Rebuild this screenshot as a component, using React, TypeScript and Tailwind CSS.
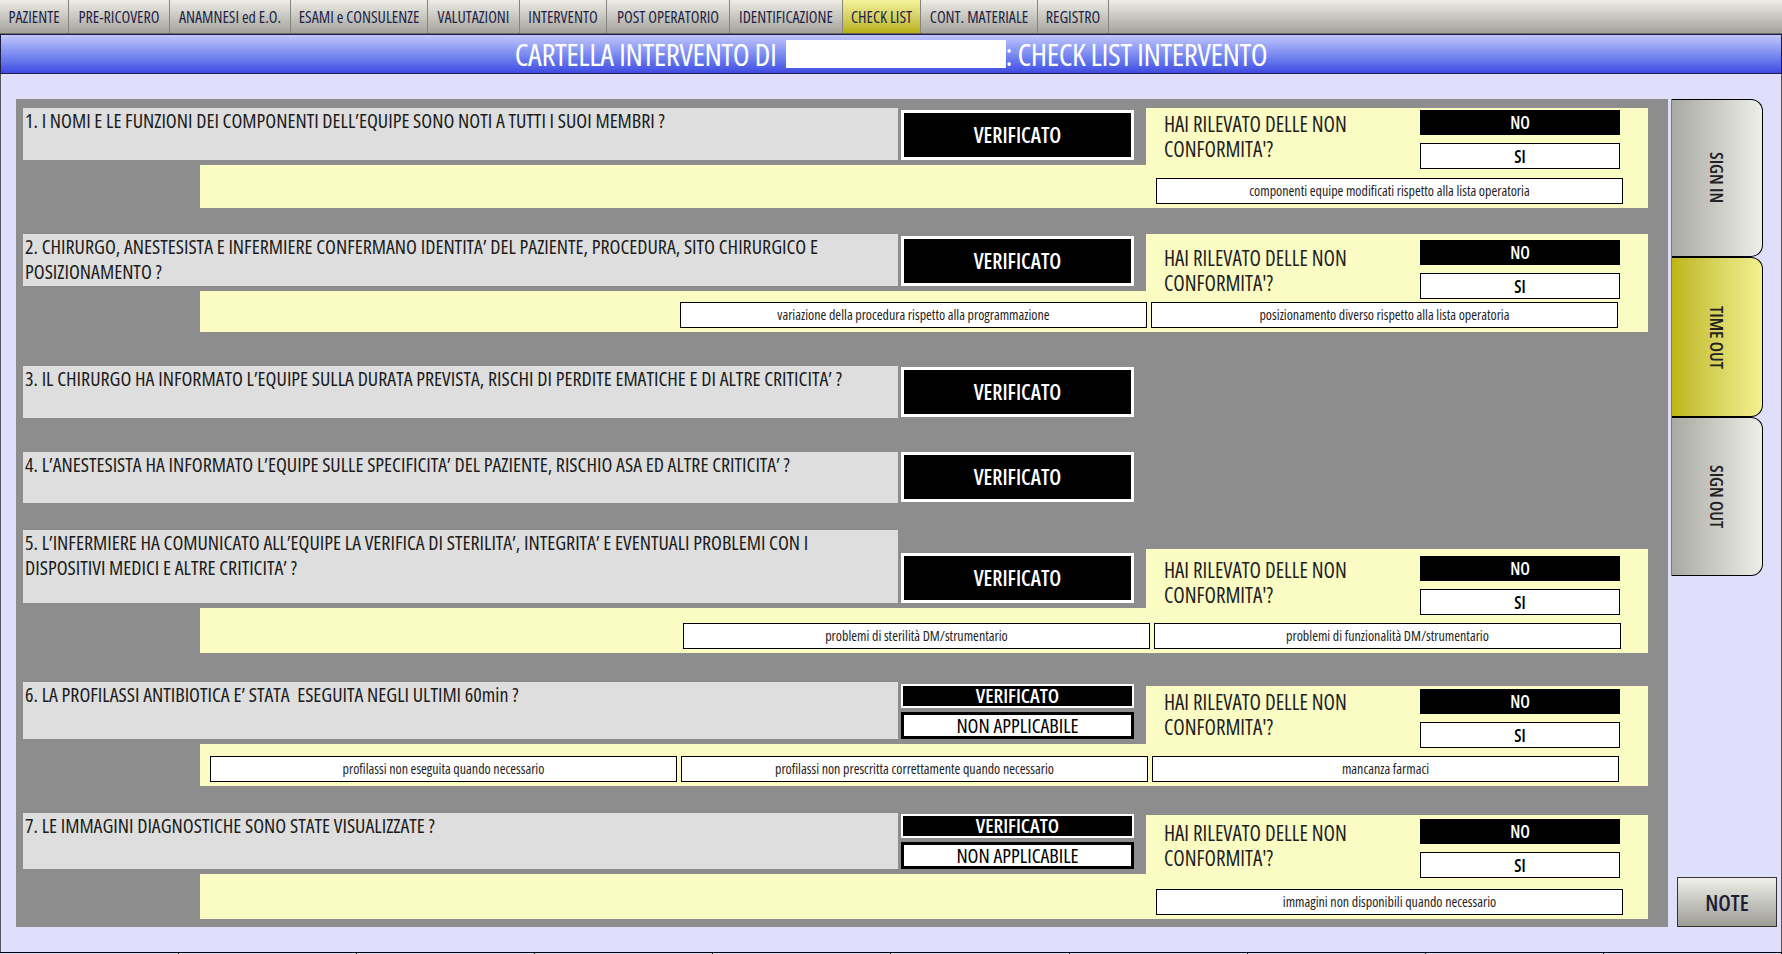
import React from "react";

type NC = {
  blockMt: string;
  blockH: string;
  textPt: string;
  noPt: string;
  stripH: string;
  stripPr: string;
  options: string[];
};

type Row = {
  q: string;
  mt: string;
  qh: string;
  double?: boolean;
  nc?: NC;
};

const rows: Row[] = [
  {
    q: "1. I NOMI E LE FUNZIONI DEI COMPONENTI DELL’EQUIPE SONO NOTI A TUTTI I SUOI MEMBRI ?",
    mt: "mt-0",
    qh: "h-[52px]",
    nc: {
      blockMt: "mt-0",
      blockH: "h-[57px]",
      textPt: "pt-[4px]",
      noPt: "pt-[2px]",
      stripH: "h-[43px]",
      stripPr: "pr-[25px]",
      options: ["componenti equipe modificati rispetto alla lista operatoria"],
    },
  },
  {
    q: "2. CHIRURGO, ANESTESISTA E INFERMIERE CONFERMANO IDENTITA’ DEL PAZIENTE, PROCEDURA, SITO CHIRURGICO E POSIZIONAMENTO ?",
    mt: "mt-[26px]",
    qh: "h-[52px]",
    nc: {
      blockMt: "mt-0",
      blockH: "h-[57px]",
      textPt: "pt-[12px]",
      noPt: "pt-[6px]",
      stripH: "h-[41px]",
      stripPr: "pr-[30px]",
      options: [
        "variazione della procedura rispetto alla programmazione",
        "posizionamento diverso rispetto alla lista operatoria",
      ],
    },
  },
  {
    q: "3. IL CHIRURGO HA INFORMATO L’EQUIPE SULLA DURATA PREVISTA, RISCHI DI PERDITE EMATICHE E DI ALTRE CRITICITA’ ?",
    mt: "mt-[34px]",
    qh: "h-[52px]",
  },
  {
    q: "4. L’ANESTESISTA HA INFORMATO L’EQUIPE SULLE SPECIFICITA’ DEL PAZIENTE, RISCHIO ASA ED ALTRE CRITICITA’ ?",
    mt: "mt-[34px]",
    qh: "h-[51px]",
  },
  {
    q: "5. L’INFERMIERE HA COMUNICATO ALL’EQUIPE LA VERIFICA DI STERILITA’, INTEGRITA’ E EVENTUALI PROBLEMI CON I DISPOSITIVI MEDICI E ALTRE CRITICITA’ ?",
    mt: "mt-[27px]",
    qh: "h-[73px]",
    nc: {
      blockMt: "mt-[19px]",
      blockH: "h-[59px]",
      textPt: "pt-[9px]",
      noPt: "pt-[7px]",
      stripH: "h-[45px]",
      stripPr: "pr-[27px]",
      options: ["problemi di sterilità DM/strumentario", "problemi di funzionalità DM/strumentario"],
    },
  },
  {
    q: "6. LA PROFILASSI ANTIBIOTICA E’ STATA \u00a0ESEGUITA NEGLI ULTIMI 60min ?",
    mt: "mt-[29px]",
    qh: "h-[57px]",
    double: true,
    nc: {
      blockMt: "mt-[4px]",
      blockH: "h-[58px]",
      textPt: "pt-[4px]",
      noPt: "pt-[3px]",
      stripH: "h-[42px]",
      stripPr: "pr-[29px]",
      options: [
        "profilassi non eseguita quando necessario",
        "profilassi non prescritta correttamente quando necessario",
        "mancanza farmaci",
      ],
    },
  },
  {
    q: "7. LE IMMAGINI DIAGNOSTICHE SONO STATE VISUALIZZATE ?",
    mt: "mt-[27px]",
    qh: "h-[56px]",
    double: true,
    nc: {
      blockMt: "mt-[2px]",
      blockH: "h-[59px]",
      textPt: "pt-[6px]",
      noPt: "pt-[4px]",
      stripH: "h-[45px]",
      stripPr: "pr-[25px]",
      options: ["immagini non disponibili quando necessario"],
    },
  },
];

const tabs: { label: string; w: string; active?: boolean }[] = [
  { label: "PAZIENTE", w: "w-[69px]" },
  { label: "PRE-RICOVERO", w: "w-[101px]" },
  { label: "ANAMNESI ed E.O.", w: "w-[121px]" },
  { label: "ESAMI e CONSULENZE", w: "w-[137px]" },
  { label: "VALUTAZIONI", w: "w-[92px]" },
  { label: "INTERVENTO", w: "w-[87px]" },
  { label: "POST OPERATORIO", w: "w-[123px]" },
  { label: "IDENTIFICAZIONE", w: "w-[113px]" },
  { label: "CHECK LIST", w: "w-[78px]", active: true },
  { label: "CONT. MATERIALE", w: "w-[117px]" },
  { label: "REGISTRO", w: "w-[71px]" },
];

function VerifyBig() {
  return (
    <div className="h-[50px] bg-black border-[3px] border-white flex items-center justify-center text-white text-[21px] font-semibold leading-none">
      VERIFICATO
    </div>
  );
}

function VerifyDouble() {
  return (
    <div className="flex flex-col gap-[4px]">
      <div className="h-[24px] bg-black border-2 border-white flex items-center justify-center text-white text-[20px] font-semibold leading-none">
        VERIFICATO
      </div>
      <div className="h-[27px] bg-white border-[3px] border-black flex items-center justify-center text-black text-[20px] font-medium leading-none">
        NON APPLICABILE
      </div>
    </div>
  );
}

function CheckRow({ row }: { row: Row }) {
  const nc = row.nc;
  return (
    <div className={`flex flex-col ${row.mt}`}>
      <div className="flex items-start">
        <div className={`w-[875px] flex flex-col ${nc ? "pb-[5px]" : ""}`}>
          <div
            className={`${row.qh} bg-[#dedede] pl-[2px] pr-[8px] text-[20px] leading-[25px] font-medium text-[#1c1c1c]`}
          >
            {row.q}
          </div>
        </div>
        <div className="w-[3px]" />
        <div className={`w-[233px] ${row.qh} flex flex-col justify-end ${nc ? "" : "pb-[1px]"}`}>
          {row.double ? <VerifyDouble /> : <VerifyBig />}
        </div>
        <div className="w-[12px]" />
        {nc && (
          <div className={`w-[502px] ${nc.blockH} bg-[#fbfbc4] flex ${nc.blockMt}`}>
            <div className={`flex-1 pl-[18px] ${nc.textPt} text-[21px] leading-[25px] font-medium text-[#1e1e1e]`}>
              <div className="h-[25px] whitespace-nowrap">HAI RILEVATO DELLE NON</div>
              <div className="h-[25px] whitespace-nowrap">CONFORMITA'?</div>
            </div>
            <div className={`relative z-10 w-[200px] mr-[28px] flex flex-col gap-[8px] ${nc.noPt}`}>
              <div className="h-[25px] shrink-0 bg-black text-white flex items-center justify-center text-[17px] font-semibold leading-none">
                NO
              </div>
              <div className="h-[26px] shrink-0 bg-white border border-black text-black flex items-center justify-center text-[17px] font-semibold leading-none">
                SI
              </div>
            </div>
          </div>
        )}
      </div>
      {nc && (
        <div
          className={`ml-[177px] w-[1448px] ${nc.stripH} bg-[#fbfbc4] flex items-end justify-end gap-[4px] ${nc.stripPr} pb-[4px]`}
        >
          {nc.options.map((o) => (
            <div
              key={o}
              className="w-[467px] h-[26px] bg-white border border-black flex items-center justify-center text-[14px] font-medium text-[#1e1e1e] leading-none"
            >
              {o}
            </div>
          ))}
        </div>
      )}
    </div>
  );
}

function SideTab({ label, h, active }: { label: string; h: string; active?: boolean }) {
  return (
    <div
      className={`${h} w-[92px] rounded-r-[12px] border border-black border-l-[#7a7a7a] flex items-center justify-center bg-linear-to-r ${
        active ? "from-[#bdb608] to-[#f4f190]" : "from-[#a9a9a2] to-[#efefea]"
      }`}
    >
      <span className="[writing-mode:vertical-rl] text-[18px] font-semibold text-[#222222] leading-none">
        {label}
      </span>
    </div>
  );
}

export default function App() {
  return (
    <div className="w-[1782px] h-[954px] overflow-hidden flex flex-col font-['Open_Sans',sans-serif] [font-stretch:75%] bg-[#dfdffb]">
      {/* top tabs */}
      <div className="h-[34px] shrink-0 flex border-b border-[#6a6a66] bg-linear-to-b from-[#eeeee7] to-[#a3a39c]">
        {tabs.map((t) => (
          <div
            key={t.label}
            className={`${t.w} h-full flex items-center justify-center border-r border-[#85857f] text-[16px] font-medium text-[#1f1f48] whitespace-nowrap ${
              t.active ? "bg-linear-to-b from-[#f5f39c] to-[#b9b10b]" : ""
            }`}
          >
            {t.label}
          </div>
        ))}
        <div className="flex-1" />
      </div>

      {/* header */}
      <div className="h-[40px] shrink-0 border border-[#1d1d46] bg-linear-to-b from-[#c3c6fb] to-[#4149e2] flex items-center justify-center text-white text-[31px] tracking-[-0.4px] leading-none">
        <span>CARTELLA INTERVENTO DI</span>
        <span className="ml-[9px] w-[220px] h-[28px] bg-white" />
        <span>: CHECK LIST INTERVENTO</span>
      </div>

      {/* content */}
      <div className="h-[878px] shrink-0 border-x border-[#555555] flex pl-[15px] pt-[25px]">
        <div className="w-[1652px] h-[828px] bg-[#8d8d8d] pl-[7px] pt-[9px] flex flex-col">
          {rows.map((r, i) => (
            <CheckRow key={i} row={r} />
          ))}
        </div>
        <div className="ml-[3px] w-[106px] h-[828px] flex flex-col">
          <SideTab label="SIGN IN" h="h-[158px]" />
          <SideTab label="TIME OUT" h="h-[160px]" active />
          <SideTab label="SIGN OUT" h="h-[159px]" />
          <div className="mt-auto ml-[6px] w-[100px] h-[50px] border border-[#333333] bg-linear-to-b from-[#f0f0ea] to-[#9d9d96] flex items-center justify-center text-[22px] font-semibold text-[#1d1d33]">
            NOTE
          </div>
        </div>
      </div>

      {/* bottom status strip */}
      <div className="h-[30px] shrink-0 border-t border-black flex pl-[1px] bg-[#dfdffb]">
        {Array.from({ length: 10 }).map((_, i) => (
          <div key={i} className="w-[186px] h-full border-r border-black" />
        ))}
      </div>
    </div>
  );
}
